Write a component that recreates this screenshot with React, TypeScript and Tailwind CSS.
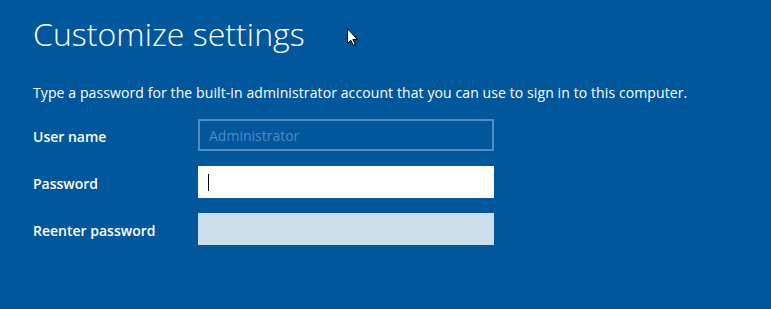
export default function App() {
  const font = { fontFamily: '"Open Sans", "Noto Sans", sans-serif' };
  return (
    <div className="relative w-[771px] h-[309px] bg-[#01579b] text-white overflow-hidden" style={font}>
      <div className="pl-[33px] pt-[14px]">
        <h1 className="text-[32px] leading-[40px] font-light tracking-[0.05px]">Customize settings</h1>
        <p className="mt-[29px] text-[14px] leading-[20px] tracking-[0.1px]">
          Type a password for the built-in administrator account that you can use to sign in to this computer.
        </p>
        <div className="mt-[16px] flex flex-col gap-[15px]">
          <div className="flex items-center h-[32px]">
            <span className="w-[165px] text-[14px] font-semibold pt-[2px]">User name</span>
            <div className="w-[296px] h-[32px] border-2 border-[#4f8dc4] flex items-center pl-[9px] text-[14px] text-[#4f8bc2]">
              Administrator
            </div>
          </div>
          <div className="flex items-center h-[32px]">
            <span className="w-[165px] text-[14px] font-semibold pt-[2px]">Password</span>
            <div className="w-[296px] h-[32px] bg-white flex items-center pl-[10px]">
              <div className="w-[1px] h-[17px] bg-black" />
            </div>
          </div>
          <div className="flex items-center h-[32px]">
            <span className="w-[165px] text-[14px] font-semibold pt-[2px]">Reenter password</span>
            <div className="w-[296px] h-[32px] bg-[#cbdeec]" />
          </div>
        </div>
      </div>
      <svg className="absolute left-[346px] top-[27px]" width="14" height="20" viewBox="0 0 14 20">
        <path d="M2.5 2.5 L2.5 17.5 L5.8 14.3 L8.3 19.3 L10.3 18.3 L7.8 13.4 L12.3 13.4 Z" fill="#0a2a45" opacity="0.35" transform="translate(1,1)" />
        <path d="M1.5 1.5 L1.5 16.5 L4.8 13.3 L7.3 18.3 L9.3 17.3 L6.8 12.4 L11.3 12.4 Z" fill="white" stroke="black" strokeWidth="1" strokeLinejoin="miter" />
      </svg>
    </div>
  );
}
